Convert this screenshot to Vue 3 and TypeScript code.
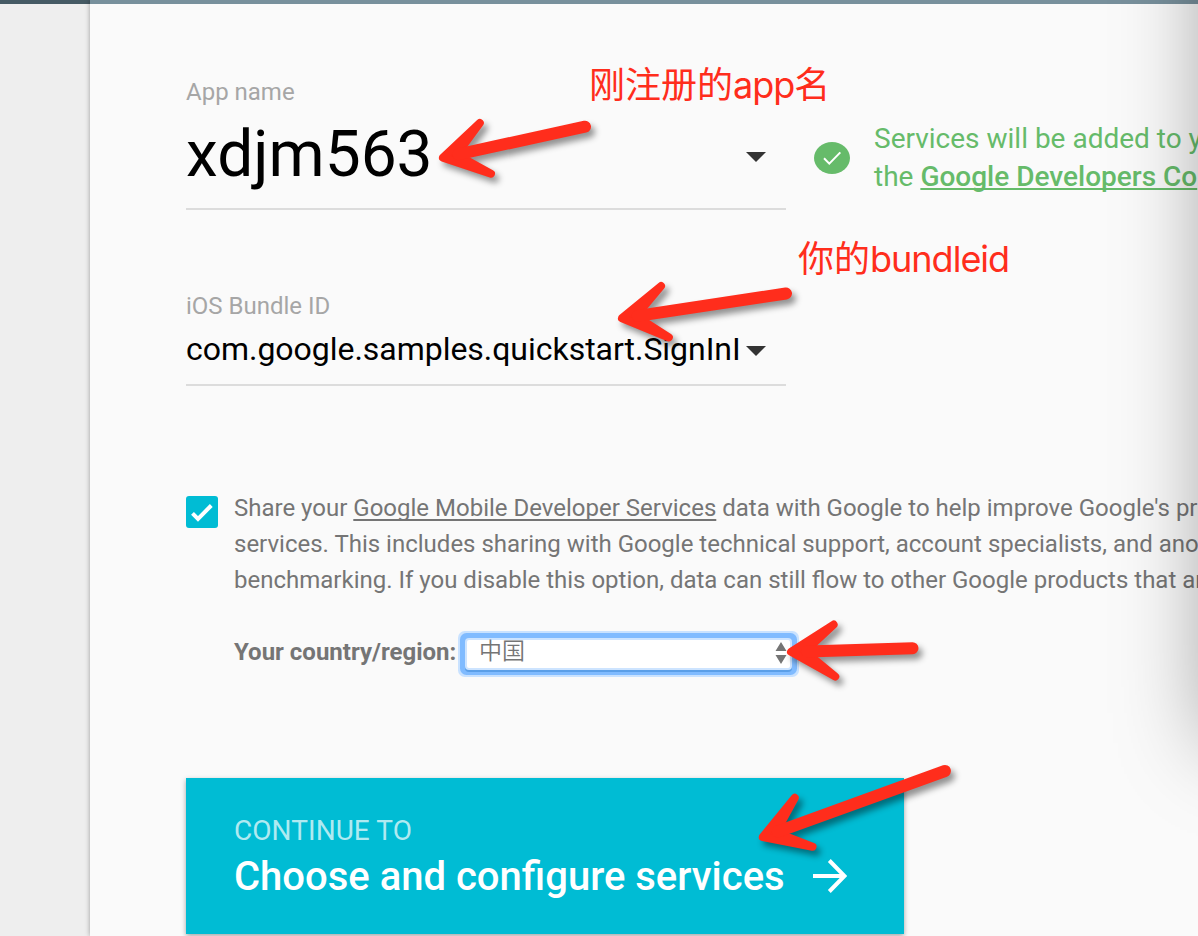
<script setup lang="ts">
interface Arrow {
  x: number
  y: number
  toX: number
  toY: number
}

const arrows: Arrow[] = [
  { x: 439, y: 158.5, toX: 585, toY: 126.7 },
  { x: 618, y: 318.8, toX: 786, toY: 293.5 },
  { x: 787, y: 652, toX: 912.5, toY: 648.2 },
  { x: 759, y: 838.5, toX: 945, toY: 771 },
]

const length = (a: Arrow): number => Math.hypot(a.toX - a.x, a.toY - a.y)
const placement = (a: Arrow): string => {
  const angle = (Math.atan2(a.toY - a.y, a.toX - a.x) * 180) / Math.PI
  return `translate(${a.x} ${a.y}) rotate(${angle})`
}
</script>

<template>
  <div class="page">
    <aside class="rail"></aside>
    <main class="sheet">
      <div class="row">
        <section class="field app-field">
          <label class="label">App name</label>
          <div class="control big">
            <span class="value">xdjm563</span>
            <svg class="caret" width="20" height="10" viewBox="0 0 20 10"><path d="M0 0H20L10 10Z" fill="#333" /></svg>
          </div>
        </section>
        <div class="status">
          <svg class="ok" width="36" height="32" viewBox="0 0 36 32">
            <ellipse cx="18" cy="16" rx="18" ry="16" fill="#66bb6a" />
            <path d="M10 16.3L15.3 21.6L26.3 10.4" fill="none" stroke="#fff" stroke-width="2" />
          </svg>
          <p class="status-text">Services will be added to y<br />the <a>Google Developers Co</a></p>
        </div>
      </div>

      <section class="field bundle-field">
        <label class="label">iOS Bundle ID</label>
        <div class="control">
          <span class="value">com.google.samples.quickstart.SignInI</span>
          <svg class="caret" width="20" height="10" viewBox="0 0 20 10"><path d="M0 0H20L10 10Z" fill="#333" /></svg>
        </div>
      </section>

      <section class="share">
        <span class="check">
          <svg width="32" height="32" viewBox="0 0 32 32"><path d="M6.5 17.3L12 22.8L25.3 9.5" fill="none" stroke="#fff" stroke-width="4" /></svg>
        </span>
        <div class="share-body">
          <p class="share-text">
            <span>Share your <a>Google Mobile Developer Services</a> data with Google to help improve Google's pr</span><br />
            <span>services. This includes sharing with Google technical support, account specialists, and ano</span><br />
            <span>benchmarking. If you disable this option, data can still flow to other Google products that ar</span>
          </p>
          <div class="country">
            <b>Your country/region:</b>
            <div class="select">
              <span>中国</span>
              <svg width="12" height="22" viewBox="0 0 12 22"><path d="M6 0L11.5 9H.5ZM.5 13H11.5L6 22Z" fill="#757575" /></svg>
            </div>
          </div>
        </div>
      </section>

      <button class="next">
        <span class="next-small">CONTINUE TO</span>
        <span class="next-big">
          Choose and configure services
          <svg width="34" height="34" viewBox="0 0 34 34"><path d="M0 17H31M16.3 1.5L31.5 17L16.3 32.5" fill="none" stroke="#fff" stroke-width="4" /></svg>
        </span>
      </button>
    </main>

    <div class="edge-shadow"></div>
    <div class="note note-app">刚注册的<span>app</span>名</div>
    <div class="note note-bundle">你的<span>bundleid</span></div>
    <svg class="arrows" width="1198" height="936" viewBox="0 0 1198 936">
      <g v-for="(arrow, i) in arrows" :key="i" class="arrow">
        <g :transform="placement(arrow)" fill="#ff2d1c" stroke="#ff2d1c" stroke-linecap="round" stroke-linejoin="round">
          <path d="M4 0L47.5 -26L18 0L47.5 26Z" stroke-width="8" />
          <path :d="`M20 0H${length(arrow)}`" stroke-width="12" />
        </g>
      </g>
    </svg>
  </div>
</template>

<style>
body {
  margin: 0;
  overflow: hidden;
}
</style>

<style scoped>
.page {
  position: relative;
  display: flex;
  width: 1198px;
  height: 936px;
  overflow: hidden;
  background: #eee;
  font-family: Roboto, "Noto Sans CJK SC", sans-serif;
}
.rail {
  flex: none;
  box-sizing: border-box;
  width: 90px;
  border-top: 4px solid #455a64;
}
.sheet {
  flex: none;
  box-sizing: border-box;
  width: 1108px;
  height: 936px;
  padding: 70px 0 0 96px;
  border-top: 4px solid #78909c;
  background: #fafafa;
  box-shadow: 0 0 5px rgba(0, 0, 0, 0.35);
}
.row {
  display: flex;
  height: 136px;
}
.field {
  box-sizing: border-box;
  flex: none;
  width: 600px;
  border-bottom: 2px solid #dcdcdc;
}
.label {
  display: block;
  color: #a6a6a6;
  font-size: 24px;
  line-height: 36px;
}
.control {
  display: flex;
  align-items: center;
  height: 50px;
  padding-right: 20px;
  font-size: 32px;
  color: #000;
}
.control.big {
  height: 92px;
  font-size: 64px;
}
.value {
  flex: none;
  width: 560px;
  white-space: nowrap;
  letter-spacing: -0.03px;
}
.big .value {
  padding-bottom: 4px;
  letter-spacing: 0;
}
.caret {
  margin-top: 3px;
}
.big .caret {
  margin-top: 2px;
}
.bundle-field {
  height: 98px;
  margin-top: 78px;
}
.status {
  display: flex;
  flex: none;
  padding: 46px 0 0 28px;
}
.ok {
  flex: none;
  margin-top: 22px;
}
.status-text {
  margin: 0 0 0 24px;
  color: #66bb6a;
  font-size: 28px;
  line-height: 38px;
  white-space: nowrap;
}
.status-text a {
  font-weight: 500;
}
a {
  text-decoration: underline;
  text-decoration-thickness: 2px;
  text-underline-offset: 3px;
  text-decoration-skip-ink: none;
}
.status-text a {
  text-underline-offset: 2px;
}
.share {
  display: flex;
  margin-top: 104px;
}
.check {
  flex: none;
  width: 32px;
  height: 32px;
  margin: 6px 16px 0 0;
  border-radius: 3px;
  background: #00bcd4;
}
.share-body {
  color: #757575;
  font-size: 24px;
}
.share-text {
  margin: 0;
  line-height: 36px;
  white-space: nowrap;
}
.country {
  display: flex;
  align-items: center;
  height: 36px;
  margin-top: 36px;
}
.country b {
  width: 233px;
  white-space: nowrap;
}
.select {
  display: flex;
  align-items: center;
  justify-content: space-between;
  box-sizing: border-box;
  width: 323px;
  height: 28px;
  padding: 0 3px 0 12px;
  margin-top: 4px;
  background: #fff;
  box-shadow: 0 0 0 2px #cde4ff, 0 2px 0 2px #5b9fe8, 0 0 0 7px #80bbff, 0 0 0 9px #c9e2ff;
  border-radius: 2px;
  font-size: 23px;
  font-weight: 350;
}
.select span {
  line-height: 28px;
  padding-bottom: 5px;
}
.select svg {
  margin-top: -2px;
}
.next {
  display: flex;
  flex-direction: column;
  align-items: flex-start;
  box-sizing: border-box;
  width: 718px;
  height: 156px;
  margin-top: 108px;
  padding: 36px 48px 0;
  border: 0;
  background: #00bcd4;
  box-shadow: 0 2px 5px rgba(0, 0, 0, 0.35);
  color: #fff;
  font-family: inherit;
}
.next-small {
  font-size: 28px;
  font-weight: 450;
  line-height: 34px;
  letter-spacing: 0.05px;
  color: rgba(255, 255, 255, 0.7);
}
.next-big {
  display: flex;
  align-items: center;
  gap: 28px;
  padding-top: 1px;
  font-size: 40px;
  font-weight: 500;
  line-height: 56px;
  white-space: nowrap;
}
.next-big svg {
  margin-top: -2px;
}
.edge-shadow {
  position: absolute;
  top: -200px;
  left: 1211px;
  width: 600px;
  height: 943px;
  box-shadow: 0 0 86px rgba(0, 0, 0, 0.4);
}
.note {
  position: absolute;
  color: #ff2d1c;
  font-family: Inter, "Noto Sans CJK SC", sans-serif;
  font-size: 36px;
  line-height: 48px;
  white-space: nowrap;
}
.note-app {
  left: 589px;
  top: 61px;
}
.note-bundle {
  left: 798px;
  top: 235px;
}
.note span {
  letter-spacing: -1px;
}
.arrows {
  position: absolute;
  top: 0;
  left: 0;
}
.arrow {
  filter: drop-shadow(4px 5px 3px rgba(0, 0, 0, 0.42));
}
</style>
